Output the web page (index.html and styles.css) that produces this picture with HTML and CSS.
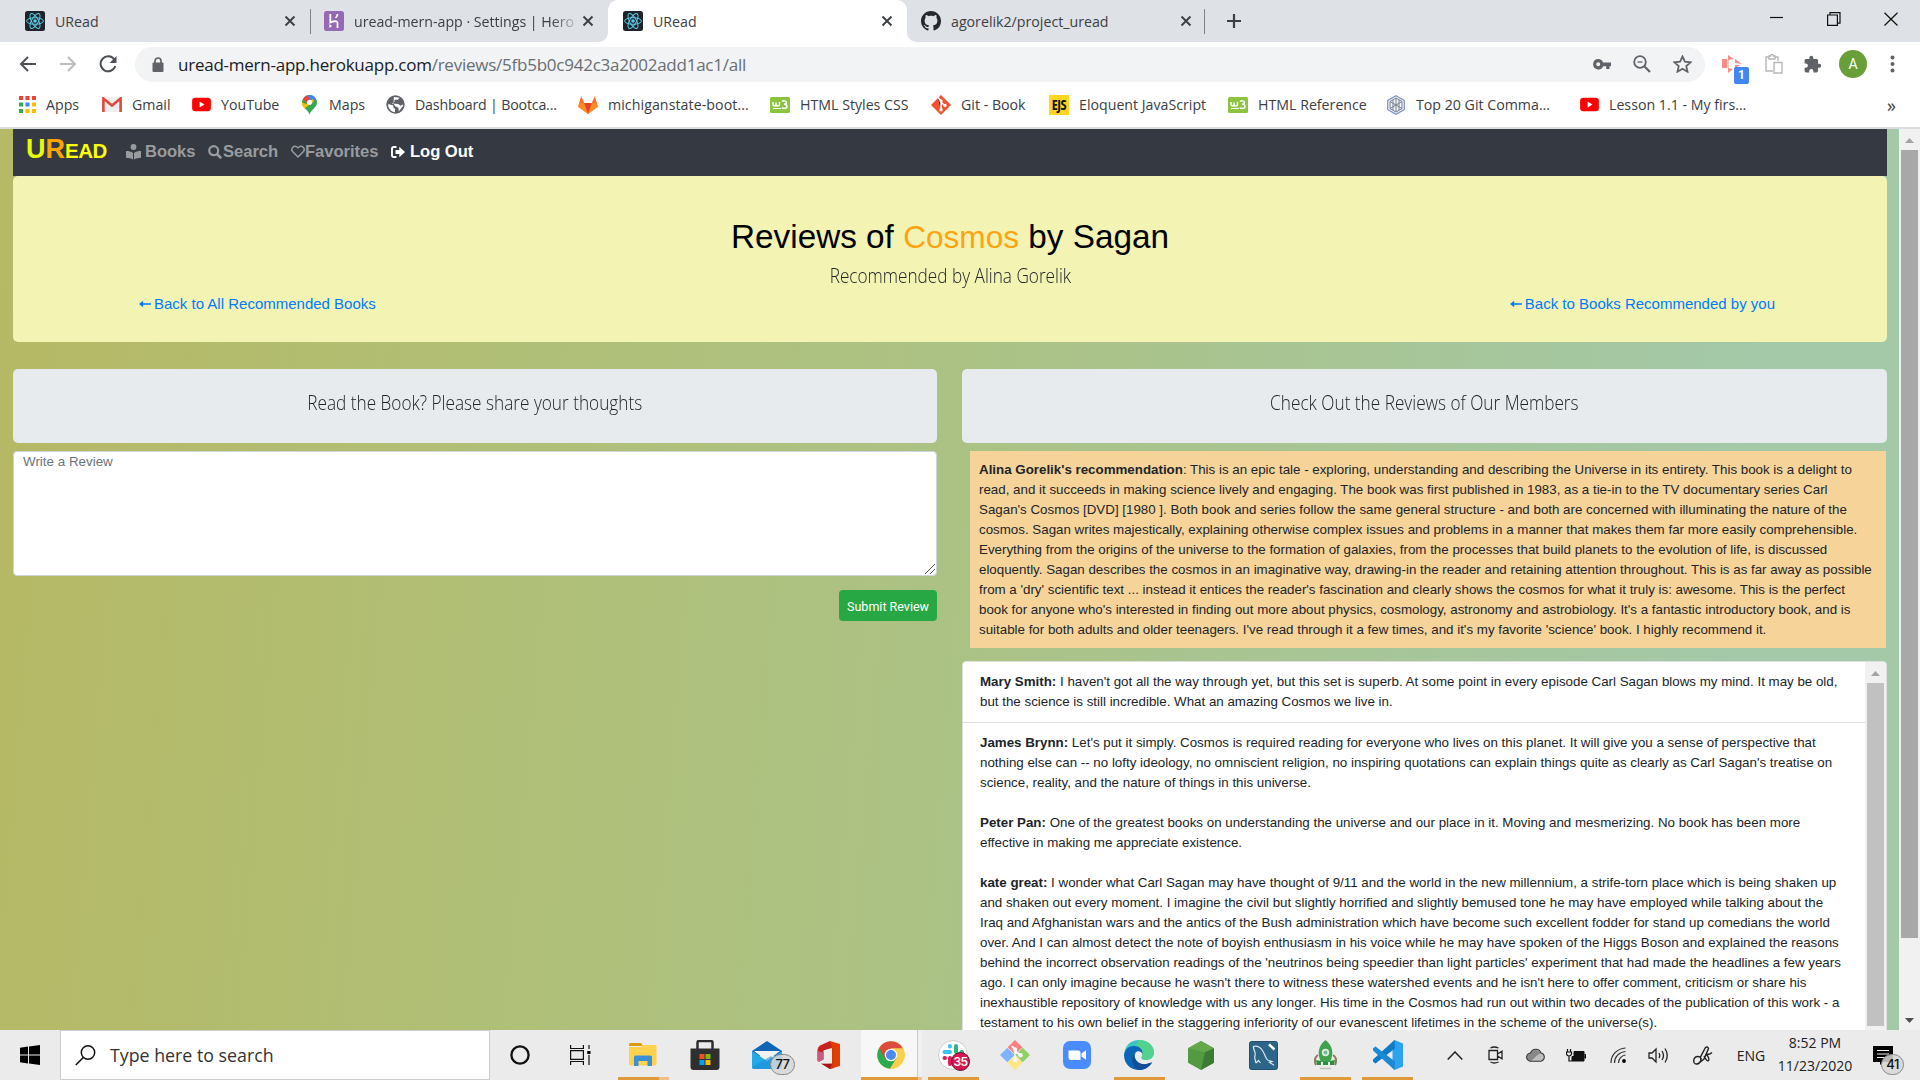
FILE: index.html
```html
<!DOCTYPE html>
<html lang="en">
<head>
<meta charset="utf-8">
<title>URead</title>
<link rel="stylesheet" href="styles.css">
</head>
<body>
<svg class="defs" width="0" height="0">
  <symbol id="react" viewBox="0 0 20 20"><rect width="20" height="20" rx="2.5" fill="#20232a"/><g fill="none" stroke="#5ccbe4" stroke-width="1"><ellipse cx="10" cy="10" rx="8.4" ry="3.3"/><ellipse cx="10" cy="10" rx="8.4" ry="3.3" transform="rotate(60 10 10)"/><ellipse cx="10" cy="10" rx="8.4" ry="3.3" transform="rotate(120 10 10)"/></g><circle cx="10" cy="10" r="1.8" fill="#5ccbe4"/></symbol>
  <symbol id="x" viewBox="0 0 12 12"><path d="M1.5 1.5l9 9M10.500 1.500l-9 9" stroke="#3c4043" stroke-width="1.900" fill="none"/></symbol>
  <symbol id="w3" viewBox="0 0 20 16"><rect width="20" height="16" rx="1.500" fill="#8bc53f"/><path d="M3 5v2.500c0 2 3 2 3 0V5.500v2c0 2 3.500 2 3.500 0V5M12 4.500c1-1 4.500-1 4.500 1 0 1.500-1.500 1.800-2.500 1.800 1.500 0 3 .5 3 2.200 0 2.300-4 2.300-5 1" fill="none" stroke="#fff" stroke-width="1.500"/><path d="M3 11.500h8" stroke="#fff" stroke-width="1"/></symbol>
  <symbol id="yt" viewBox="0 0 20 16"><rect y=".8" width="20" height="14.400" rx="3.500" fill="#f00"/><path d="M8 4.800v6.400l5.200-3.200z" fill="#fff"/></symbol>
</svg>

<header class="tabs">
  <div class="tab tab-1"><svg class="fav"><use href="#react"/></svg><span class="tab-name">URead</span><svg class="close"><use href="#x"/></svg></div>
  <div class="tab tab-2"><svg class="fav" viewBox="0 0 20 20"><rect width="20" height="20" rx="2.500" fill="#9669b5"/><path d="M6.300 3v8.500c2-1 7.200-2.500 7.200.5v5" fill="none" stroke="#fff" stroke-width="1.800"/><path d="M5.400 13l2.600 2-2.600 2zM12.600 3h1.800q0 2.500-1.800 4h-1.800q1.800-2 1.800-4z" fill="#fff"/></svg><span class="tab-name fade">uread-mern-app · Settings | Hero</span><svg class="close"><use href="#x"/></svg></div>
  <div class="tab tab-3"><svg class="fav"><use href="#react"/></svg><span class="tab-name">URead</span><svg class="close"><use href="#x"/></svg></div>
  <div class="tab tab-4"><svg class="fav" viewBox="0 0 16 16"><path fill="#24292e" d="M8 0C3.580 0 0 3.580 0 8c0 3.540 2.290 6.530 5.470 7.590.4.070.550-.170.550-.380 0-.190-.010-.820-.010-1.490-2.010.370-2.530-.490-2.690-.940-.090-.230-.480-.940-.820-1.130-.280-.150-.680-.520-.010-.530.630-.010 1.080.580 1.230.820.720 1.210 1.870.870 2.330.660.070-.520.280-.870.510-1.070-1.780-.200-3.640-.890-3.640-3.950 0-.870.310-1.590.820-2.150-.080-.200-.360-1.020.080-2.120 0 0 .670-.210 2.200.820.640-.180 1.320-.270 2-.270s1.360.090 2 .270c1.530-1.040 2.200-.820 2.200-.820.440 1.100.160 1.920.080 2.120.510.560.820 1.270.820 2.150 0 3.070-1.870 3.750-3.650 3.950.290.250.540.730.540 1.480 0 1.070-.010 1.930-.010 2.200 0 .210.150.460.550.380A8.010 8.010 0 0 0 16 8c0-4.420-3.580-8-8-8z"/></svg><span class="tab-name">agorelik2/project_uread</span><svg class="close"><use href="#x"/></svg></div>
  <svg class="plus" viewBox="0 0 16 16"><path d="M8 1v14M1 8h14" stroke="#3c4043" stroke-width="2.200"/></svg>
  <div class="win">
    <svg width="14" height="14"><path d="M0 5.500h13" stroke="#111" stroke-width="1.200"/></svg>
    <svg width="14" height="14"><path d="M.6 3h9.800v10.400H.6zM3 3V.6h10v10.600h-2.500" fill="none" stroke="#111" stroke-width="1.200"/></svg>
    <svg width="14" height="14"><path d="M.5.8l13 12.700M13.500.8l-13 12.700" stroke="#111" stroke-width="1.200"/></svg>
  </div>
</header>

<div class="toolbar">
  <div class="nav-buttons">
    <svg width="18" height="16" viewBox="0 0 18 16"><path d="M17 8H2M9 1L2 8l7 7" fill="none" stroke="#4d5156" stroke-width="2"/></svg>
    <svg width="18" height="16" viewBox="0 0 18 16"><path d="M1 8h15M9 1l7 7-7 7" fill="none" stroke="#babcbe" stroke-width="2"/></svg>
    <svg width="18" height="18" viewBox="0 0 18 18"><path d="M15.300 4.500A7.500 7.500 0 1 0 16.300 11" fill="none" stroke="#4d5156" stroke-width="2"/><path d="M17.500 1v7h-7z" fill="#4d5156"/></svg>
  </div>
  <div class="omnibox">
    <svg width="12" height="15" viewBox="0 0 12 15"><path d="M3 6V4a3 3 0 0 1 6 0v2" fill="none" stroke="#5f6368" stroke-width="1.700"/><rect x=".5" y="5.500" width="11" height="9.500" rx="1" fill="#5f6368"/></svg>
    <span class="url"><b>uread-mern-app.herokuapp.com</b>/reviews/5fb5b0c942c3a2002add1ac1/all</span>
    <div class="omni-icons">
      <svg width="18" height="11" viewBox="0 0 18 11"><path fill="#5f6368" fill-rule="evenodd" d="M5.200 0a5.200 5.200 0 0 1 4.900 3.500H18v3.800h-1.500V10h-3.300V7.300h-3.100A5.200 5.200 0 1 1 5.200 0zm0 3.300a2 2 0 1 0 0 4 2 2 0 0 0 0-4z"/></svg>
      <svg width="18" height="18" viewBox="0 0 18 18"><circle cx="7" cy="7" r="5.800" fill="none" stroke="#5f6368" stroke-width="1.800"/><path d="M11.300 11.300l5.700 5.700" stroke="#5f6368" stroke-width="2.200"/><path d="M4.500 7h5" stroke="#5f6368" stroke-width="1.300"/></svg>
      <svg width="19" height="18" viewBox="0 0 19 18"><path d="M9.500 1.500l2.400 5.200 5.700.6-4.300 3.800 1.200 5.600-5-2.900-5 2.900 1.200-5.600L1.400 7.300l5.700-.6z" fill="none" stroke="#5f6368" stroke-width="1.800"/></svg>
    </div>
  </div>
  <div class="ext-icons">
    <div class="ext"><svg width="20" height="18" viewBox="0 0 20 18"><path d="M0 4h5v9H0zM6 0l6 4-6 1zM6 13l5 1-5 4zM13 4l7 5-7-1zM13 10l5 0-5 4z" fill="#f98b88"/><path d="M6 5v8" stroke="#f98b88"/></svg><span class="ext-badge">1</span></div>
    <svg width="18" height="20" viewBox="0 0 18 20"><path d="M8 17H1V3h3M10 3h3v4M4 2h1.500a1.500 1.500 0 0 1 3 0H10v3H4zM9 8.500h8V19H9z" fill="none" stroke="#b5b7b9" stroke-width="1.400"/></svg>
    <svg width="19" height="19" viewBox="0 0 24 24"><path fill="#5f6368" d="M20.500 11H19V7c0-1.100-.9-2-2-2h-4V3.500a2.500 2.500 0 0 0-5 0V5H4c-1.100 0-2 .9-2 2v3.800h1.500a2.700 2.700 0 0 1 0 5.400H2V20c0 1.100.9 2 2 2h3.800v-1.500a2.700 2.700 0 0 1 5.400 0V22H17c1.100 0 2-.9 2-2v-4h1.500a2.500 2.500 0 0 0 0-5z"/></svg>
    <span class="avatar">A</span>
    <svg width="5" height="18" viewBox="0 0 5 18"><g fill="#5f6368"><circle cx="2.500" cy="2.500" r="2"/><circle cx="2.500" cy="9" r="2"/><circle cx="2.500" cy="15.500" r="2"/></g></svg>
  </div>
</div>

<nav class="bookmarks">
  <span class="bm bm-apps"><svg width="17" height="17" viewBox="0 0 17 17"><path d="M0 0h4v4H0zM6.500 0h4v4h-4zM13 0h4v4h-4z" fill="#ea4335"/><path d="M0 6.500h4v4H0z" fill="#34a853"/><path d="M6.500 6.500h4v4h-4z" fill="#4285f4"/><path d="M13 6.500h4v4h-4zM6.500 13h4v4h-4zM13 13h4v4h-4z" fill="#fbbc05"/><path d="M0 13h4v4H0z" fill="#34a853"/></svg>Apps</span>
  <span class="bm"><svg width="20" height="15" viewBox="0 0 20 15"><path fill="#eee" d="M1 0h18v15H1z"/><path d="M1.400 15V1.500L10 8.500l8.600-7V15" fill="none" stroke="#dd4b3e" stroke-width="2.600"/></svg>Gmail</span>
  <span class="bm"><svg width="19" height="15"><use href="#yt"/></svg>YouTube</span>
  <span class="bm bm-maps"><svg width="15" height="20" viewBox="0 0 15 20"><path fill="#34a853" d="M7.500 20C7 15 0 13 0 7.500a7.500 7.500 0 0 1 15 0C15 13 8 15 7.500 20z"/><path fill="#4285f4" d="M5 .5a7.500 7.500 0 0 1 9 3.500L8.500 8z"/><path fill="#ea4335" d="M5 .5L8 4 4 8.500 1.200 3.500A7.500 7.500 0 0 1 5 .5z"/><path fill="#fbbc05" d="M4.500 9l6-5 1.500 2.500-9.500 7C0 11 0 9 0 7.500z"/><circle cx="7.500" cy="7.300" r="2.600" fill="#fff"/></svg>Maps</span>
  <span class="bm bm-dash"><svg width="19" height="19" viewBox="0 0 18 18"><circle cx="9" cy="9" r="8.700" fill="#5f6368"/><path d="M2 8.500L7 10v2l1.500 1v3.300A7.300 7.300 0 0 1 2 8.500zM7.500 1.800L13 2.500 11 4.500H8v2L5.500 8l6 .5 2.500 1.800 2-1.300.2 1.500-4.200 5.200c.2-3 0-4-3-4.700l-2-3z" fill="#fff"/></svg>Dashboard | Bootca...</span>
  <span class="bm bm-lab"><svg width="20" height="18" viewBox="0 0 20 18"><path d="M10 18L0 10.700 3.200 0l3 7h7.600l3-7L20 10.700z" fill="#fc6d26"/><path d="M10 18L6.200 7h7.600z" fill="#e24329"/><path d="M0 10.700L1.500 7h4.700L10 18zM20 10.700L18.500 7h-4.700L10 18z" fill="#fca326" opacity=".55"/></svg>michiganstate-boot...</span>
  <span class="bm"><svg width="20" height="16"><use href="#w3"/></svg>HTML Styles CSS</span>
  <span class="bm"><svg width="20" height="20" viewBox="0 0 20 20"><path d="M10 0l10 10-10 10L0 10z" fill="#f4502f"/><path d="M7 2.500L10 6v9M10 7l4 4" stroke="#fff" stroke-width="1.500"/><g fill="#fff"><circle cx="10" cy="6" r="1.700"/><circle cx="10" cy="14.800" r="1.700"/><circle cx="14" cy="10.500" r="1.700"/></g></svg>Git - Book</span>
  <span class="bm"><span class="ejs">EJS</span>Eloquent JavaScript</span>
  <span class="bm"><svg width="20" height="16"><use href="#w3"/></svg>HTML Reference</span>
  <span class="bm"><svg width="20" height="20" viewBox="0 0 20 20"><path d="M10 .8l8.300 4.600v9.200L10 19.200l-8.300-4.600V5.400z" fill="#eef1f8" stroke="#7f93c8" stroke-width="1.200"/><path d="M10 3l6 3.500v7L10 17l-6-3.500v-7zM10 3v14M4 6.500l12 7M16 6.500l-12 7M7 5v10M13 5v10" fill="none" stroke="#7a828c" stroke-width="1"/></svg>Top 20 Git Comma...</span>
  <span class="bm bm-yt"><svg width="19" height="15"><use href="#yt"/></svg>Lesson 1.1 - My firs...</span>
  <span class="more">»</span>
</nav>

<div class="viewport">
  <main class="page">
    <nav class="navbar">
      <span class="brand"><span class="brand-u">U</span><span class="brand-r">R</span><span class="brand-s">EAD</span></span>
      <span class="nav-link nav-books"><svg width="15" height="16" viewBox="0 0 15 16"><circle cx="7.500" cy="3" r="2.900"/><path d="M0 7c3 0 5 .5 7 2v6.500c-2-1.200-4-1.600-7-1.700zM15 7c-3 0-5 .5-7 2v6.500c2-1.200 4-1.600 7-1.700z"/></svg>Books</span>
      <span class="nav-link nav-search"><svg width="14" height="14" viewBox="0 0 14 14"><circle cx="5.700" cy="5.700" r="4.500" fill="none" stroke="#999b9f" stroke-width="2.200"/><path d="M9 9l4.200 4.200" stroke="#999b9f" stroke-width="2.600"/></svg>Search</span>
      <span class="nav-link nav-fav"><svg width="14" height="13" viewBox="0 0 14 13"><path d="M7 12L1.800 6.800C-.8 4 2.800-1 7 2.800 11.200-1 14.800 4 12.200 6.800z" fill="none" stroke="#999b9f" stroke-width="1.500"/></svg>Favorites</span>
      <span class="nav-link nav-out"><svg width="14" height="12" viewBox="0 0 14 12"><path d="M5.500 1H2.800Q1 1 1 2.800v6.400Q1 11 2.800 11h2.700" fill="none" stroke="#fff" stroke-width="1.900"/><path d="M4.500 4h3.800V.8L14 6l-5.700 5.200V8H4.500z"/></svg>Log Out</span>
    </nav>
    <section class="hero">
      <h1>Reviews of <span class="book">Cosmos</span> by Sagan</h1>
      <p class="by"><span class="narrow">Recommended by Alina Gorelik</span></p>
      <div class="links">
        <a><svg width="12" height="8" viewBox="0 0 13 8"><path d="M4.500 .5v2.600H13v1.800H4.500v2.600L0 4z"/></svg>Back to All Recommended Books</a>
        <a><svg width="12" height="8" viewBox="0 0 13 8"><path d="M4.500 .5v2.600H13v1.800H4.500v2.600L0 4z"/></svg>Back to Books Recommended by you</a>
      </div>
    </section>
    <div class="columns">
      <section class="col">
        <h2 class="panel"><span class="narrow">Read the Book? Please share your thoughts</span></h2>
        <div class="textarea">Write a Review<svg width="10" height="10"><path d="M0 10L10 0M5 10l5-5" stroke="#555" stroke-width="1"/></svg></div>
        <span class="submit">Submit Review</span>
      </section>
      <section class="col">
        <h2 class="panel"><span class="narrow">Check Out the Reviews of Our Members</span></h2>
        <p class="rec"><b>Alina Gorelik's recommendation</b>: This is an epic tale - exploring, understanding and describing the Universe in its entirety. This book is a delight to<br>read, and it succeeds in making science lively and engaging. The book was first published in 1983, as a tie-in to the TV documentary series Carl<br>Sagan's Cosmos [DVD] [1980 ]. Both book and series follow the same general structure - and both are concerned with illuminating the nature of the<br>cosmos. Sagan writes majestically, explaining otherwise complex issues and problems in a manner that makes them far more easily comprehensible.<br>Everything from the origins of the universe to the formation of galaxies, from the processes that build planets to the evolution of life, is discussed<br>eloquently. Sagan describes the cosmos in an imaginative way, drawing-in the reader and retaining attention throughout. This is as far away as possible<br>from a 'dry' scientific text ... instead it entices the reader's fascination and clearly shows the cosmos for what it truly is: awesome. This is the perfect<br>book for anyone who's interested in finding out more about physics, cosmology, astronomy and astrobiology. It's a fantastic introductory book, and is<br>suitable for both adults and older teenagers. I've read through it a few times, and it's my favorite 'science' book. I highly recommend it.</p>
        <div class="reviews">
          <div class="review-list">
            <p class="first"><b>Mary Smith:</b> I haven't got all the way through yet, but this set is superb. At some point in every episode Carl Sagan blows my mind. It may be old,<br>but the science is still incredible. What an amazing Cosmos we live in.</p>
            <p><b>James Brynn:</b> Let's put it simply. Cosmos is required reading for everyone who lives on this planet. It will give you a sense of perspective that<br>nothing else can -- no lofty ideology, no omniscient religion, no inspiring quotations can explain things quite as clearly as Carl Sagan's treatise on<br>science, reality, and the nature of things in this universe.</p>
            <p><b>Peter Pan:</b> One of the greatest books on understanding the universe and our place in it. Moving and mesmerizing. No book has been more<br>effective in making me appreciate existence.</p>
            <p><b>kate great:</b> I wonder what Carl Sagan may have thought of 9/11 and the world in the new millennium, a strife-torn place which is being shaken up<br>and shaken out every moment. I imagine the civil but slightly horrified and slightly bemused tone he may have employed while talking about the<br>Iraq and Afghanistan wars and the antics of the Bush administration which have become such excellent fodder for stand up comedians the world<br>over. And I can almost detect the note of boyish enthusiasm in his voice while he may have spoken of the Higgs Boson and explained the reasons<br>behind the incorrect observation readings of the 'neutrinos being speedier than light particles' experiment that had made the headlines a few years<br>ago. I can only imagine because he wasn't there to witness these watershed events and he isn't here to offer comment, criticism or share his<br>inexhaustible repository of knowledge with us any longer. His time in the Cosmos had run out within two decades of the publication of this work - a<br>testament to his own belief in the staggering inferiority of our evanescent lifetimes in the scheme of the universe(s).</p>
          </div>
          <div class="inner-bar"><svg width="9" height="5"><path d="M0 5L4.500 0 9 5z" fill="#a3a3a3"/></svg><i></i></div>
        </div>
      </section>
    </div>
  </main>
  <div class="scrollbar"><svg width="9" height="5"><path d="M0 5L4.500 0 9 5z" fill="#a3a3a3"/></svg><i></i><svg width="9" height="5"><path d="M0 0h9L4.500 5z" fill="#505050"/></svg></div>
</div>

<footer class="taskbar">
  <div class="start"><svg width="20" height="20" viewBox="0 0 20 20"><path d="M0 2.800L8 1.600v7.900H0zM9 1.500L20 0v9.500H9zM0 10.500h8v7.900l-8-1.200zM9 10.500h11V20L9 18.500z"/></svg></div>
  <div class="search"><svg width="21" height="21" viewBox="0 0 21 21"><circle cx="13" cy="7.500" r="6.700" fill="none" stroke="#111" stroke-width="1.500"/><path d="M8.300 12.500L.8 20" stroke="#111" stroke-width="1.600"/></svg>Type here to search</div>
  <div class="slots">
    <div class="slot"><svg width="20" height="20"><circle cx="10" cy="10" r="8.600" fill="none" stroke="#111" stroke-width="2.300"/></svg></div>
    <div class="slot"><svg width="21" height="20" viewBox="0 0 21 20"><path d="M.6 0v3.500h12.800V0M.6 20v-3.500h12.800V20M.6 5.600h12.800v8.800H.6zM19 0v4M19 10v10" fill="none" stroke="#111" stroke-width="1.200"/><path d="M17.300 6h3.200v3h-3.200z"/></svg></div>
    <div class="slot run group"><svg width="28" height="24" viewBox="0 0 28 24"><path d="M0 1.500Q0 0 1.500 0H12l2 3H0z" fill="#df9a07"/><path d="M0 4h12l2-2h12.500q1 0 1 1v18q0 1.500-1.500 1.500H1.500Q0 22.500 0 21z" fill="#ffd24e"/><path d="M5 14q0-1.500 1.500-1.500h15q1.500 0 1.500 1.500v9h-4.500v-5h-9v5H5z" fill="#3d8fd3"/></svg></div>
    <div class="slot"><svg width="30" height="30" viewBox="0 0 30 30"><path d="M7.500 9V2.500Q7.500 1 9 1h12q1.500 0 1.500 1.500V9" fill="none" stroke="#2d2d2d" stroke-width="2.500"/><path d="M.5 8.500h29V27q0 3-3 3h-23q-3 0-3-3z" fill="#2f2f2f"/><path d="M9.500 14h5v5h-5z" fill="#f25022"/><path d="M15.500 14h5v5h-5z" fill="#7fba00"/><path d="M9.500 20h5v5h-5z" fill="#00a4ef"/><path d="M15.500 20h5v5h-5z" fill="#ffb900"/></svg></div>
    <div class="slot"><svg width="30" height="28" viewBox="0 0 30 28"><path d="M0 10L15 0l15 10v5H0z" fill="#1066b5"/><path d="M2 10h26L15 20z" fill="#f2f2f2"/><path d="M0 10l15 10L30 10v16q0 2-2 2H2q-2 0-2-2z" fill="#24a9e6"/><path d="M0 26L19 15l11 11q0 2-2 2H2q-2 0-2-2z" fill="#1a8fdc" opacity=".6"/></svg><span class="badge mail">77</span></div>
    <div class="slot"><svg width="24" height="28" viewBox="0 0 24 28"><path d="M13 0l10 3v22l-10 3z" fill="#e23d06"/><path d="M13 0L3 4.500Q.5 6 .5 9v10q0 2 2 1.500l4-2V9.500L15 7z" fill="#c9211e"/><path d="M.5 10v9q0 2 2 1.500l4-2v-7z" fill="#c65d7e"/><path d="M4 22.500h11V7l2-.5V27l-4 1z" fill="#d83b01"/><path d="M4 22.500h11L13 28z" fill="#a8121d"/><path d="M7 9.500L15 7v15.500H4l3-2z" fill="#ebebeb"/></svg></div>
    <div class="slot run active group"><svg width="28" height="28" viewBox="0 0 28 28"><circle cx="14" cy="14" r="13.700" fill="#fcd04b"/><path d="M14 14L2.100 7.100A13.700 13.700 0 0 0 13 27.700L20 17z" fill="#2da94f"/><path d="M14 14L8 17.500 2.100 7.100A13.700 13.700 0 0 1 26 7.600H14z" fill="#dd4b3e"/><path d="M14 7.600h12A13.700 13.700 0 0 1 13 27.700l6.500-10.500z" fill="#fcd04b"/><circle cx="14" cy="14" r="6.300" fill="#fff"/><circle cx="14" cy="14" r="5" fill="#4a8af4"/></svg></div>
    <div class="slot run"><svg width="30" height="30" viewBox="0 0 30 30"><circle cx="15" cy="15" r="14.500" fill="#fff" stroke="#ccc"/><g stroke-width="4" stroke-linecap="round"><path d="M6.500 12H12M12 6v.5" stroke="#36c5f0"/><path d="M18 6v6M24 12h-.5" stroke="#2eb67d"/><path d="M12 18v6M6.500 18h.5" stroke="#e01e5a"/><path d="M18 18h6" stroke="#ecb22e"/></g></svg><span class="badge slack">35</span></div>
    <div class="slot"><svg width="30" height="30" viewBox="0 0 30 30"><path d="M15 0l7.300 7.300L15 14.600 7.700 7.300z" fill="#fb7f80"/><path d="M7.300 7.700l7.300 7.300-7.300 7.300L0 15z" fill="#80b3ff"/><path d="M22.700 7.700L30 15l-7.300 7.300-7.300-7.300z" fill="#8ed066"/><path d="M15 15.400l7.300 7.300L15 30l-7.300-7.300z" fill="#ffe680"/><path d="M12 6l3 4v10M15 11l5 4" stroke="#f7f7f2" stroke-width="2" fill="none"/><g fill="#f7f7f2"><circle cx="15" cy="9.500" r="2.200"/><circle cx="15" cy="20" r="2.300"/><circle cx="20.500" cy="15.300" r="2.300"/></g></svg></div>
    <div class="slot"><svg width="28" height="28" viewBox="0 0 28 28"><rect width="28" height="28" rx="7" fill="#4a8cff"/><path d="M5.500 9.500H15q2.500 0 2.500 2.500v7H8q-2.500 0-2.500-2.500zM18.500 12.500L23 9.200v9.600l-4.500-3.300z" fill="#fff"/></svg></div>
    <div class="slot run"><svg width="30" height="30" viewBox="0 0 30 30"><path d="M.5 12C2 4 8 0 15 0c9 0 15 6 15 12.500 0 5-4 7.500-8 7.500-3 0-5-1-4.500-2.500 2.500-4-1-8-5.500-8C6 9.500 2 13 .5 17z" fill="#39c5c4"/><path d="M15 0c9 0 15 6 15 12.500 0 5-4 7.500-8 7.500-3 0-5-1-4.500-2.500C20 13 17 8 12 5z" fill="#5bd57e" opacity=".75"/><path d="M0 15C1 8 6 6 10 6c5 0 9 3.500 8.500 8-2-4.500-8.500-3-8 2.500.5 5 6 9 12 7.500 3-.7 5-2 5.500-1.500C25 27.500 20 30 15 30 7 30 0 24 0 15z" fill="#0d65b8"/><path d="M10.500 16c.5 5 6 9.500 12 8 3-.7 5-2 5.500-1.500C25 27.500 20 30 15 30 9 28 5 18 12 12.500q-1.500 1.500-1.500 3.500z" fill="#124f9b"/></svg></div>
    <div class="slot"><svg width="26" height="29" viewBox="0 0 26 29"><path d="M13 0l13 7.200v14.600L13 29 0 21.800V7.200z" fill="#539a43"/><path d="M13 0l13 7.200-9 4L0 7.200z" fill="#64a84b"/><path d="M26 7.200v14.600L13 29l4-17.800z" fill="#3d7a35"/></svg></div>
    <div class="slot"><svg width="29" height="29" viewBox="0 0 29 29"><rect x=".5" y=".5" width="28" height="28" rx="2" fill="#2c6587" stroke="#23506c"/><path d="M7 22l-1-4c-1-3 1-4 0-6.500C5 8 4 6.500 4.500 5.500 8 4.500 11 6 13.500 9.500c2 3 3 7 4.500 9 1 1.300 3.500 1.500 5 2l-2.500.8 4.500 3M7 22l2.500-2.500 2 2.500" fill="none" stroke="#dce8ee" stroke-width="1.200"/><path d="M20 3.500l5.500 5" stroke="#fff" stroke-width="2.400"/></svg></div>
    <div class="slot run"><svg width="23" height="30" viewBox="0 0 23 30"><path d="M4 15Q-1 18 2 25M19 15q5 3 2 10" fill="none" stroke="#8a7c5c" stroke-width="2"/><path d="M11.500 0C19 6 20 14 16 22H7C3 14 4 6 11.500 0z" fill="#3fa34d"/><circle cx="11.500" cy="12.500" r="3.700" fill="#d9efe2"/><circle cx="11.500" cy="12.500" r="2" fill="#78b99a"/><path d="M2 20l5 1v4H3zM21 20l-5 1v4h4zM9 22h5v3H9z" fill="#2f8c44"/><path d="M6 28.500h11" stroke="#bdbdbd" stroke-width="1.500"/></svg></div>
    <div class="slot run"><svg width="31" height="30" viewBox="0 0 31 30"><path d="M22.500 0L31 3.500v23L22.500 30l-2-2V2z" fill="#2ba3ee"/><path d="M22.500 0L1 19.500v2.200L3.500 23.500 23 8.500z" fill="#0d7dc9"/><path d="M22.500 30L1 10.500V8.300L3.500 6.500 23 21.500z" fill="#1a8ad6"/></svg></div>
  </div>
  <div class="tray">
    <svg width="16" height="9"><path d="M.7 8.500L8 1l7.300 7.500" fill="none" stroke="#222" stroke-width="1.500"/></svg>
    <svg width="15" height="18" viewBox="0 0 15 18"><path d="M1 4.500h8.500v9H1zM9.500 8l4.500-2.800v7.600L9.500 10M2.500 2q3.500-2 8 0M2.500 16q3.500 2 8 0" fill="none" stroke="#222" stroke-width="1.300"/></svg>
    <svg width="20" height="14" viewBox="0 0 20 14"><path d="M5 13.200a4 4 0 0 1-.5-8.200C6 .5 13-.5 15 5a4.200 4.200 0 0 1 0 8.200z" fill="#bfbfbf"/><path d="M5 13a4 4 0 0 1-.5-8C7 1 12 1 14.500 5L11 7.500z" fill="#888"/><path d="M5 13.200a4 4 0 0 1-.5-8.200C6 .5 13-.5 15 5a4.200 4.200 0 0 1 0 8.200z" fill="none" stroke="#333" stroke-width="1.100"/></svg>
    <svg width="20" height="13" viewBox="0 0 20 13"><path d="M8 2.500h10v9.500H6V7.500h2z" fill="#111" stroke="#111"/><path d="M18.500 5h1.500v4.500h-1.500z"/><path d="M1.500 0v3M4.500 0v3M.5 3h5v2Q5 7 3 7 1 7 .5 5zM3 7v5h3" fill="none" stroke="#111" stroke-width="1.200"/></svg>
    <svg width="16" height="16" viewBox="0 0 16 16"><g fill="none" stroke="#333" stroke-width="1.200"><path d="M1 16C1 8 7 1.500 15.500 1M4.500 16C4.500 10 9 5 15.500 4.500M8.500 16c0-4 3-7.500 7-8"/></g><circle cx="14" cy="14" r="1.900"/></svg>
    <svg width="21" height="17" viewBox="0 0 21 17"><path d="M1 6h3l4-4v13l-4-4H1zM11 6q1.500 2.500 0 5M14 4q3 4.500 0 9M17 1.500q4.500 7 0 14" fill="none" stroke="#222" stroke-width="1.300"/></svg>
    <svg width="20" height="19" viewBox="0 0 20 19"><path d="M8 15.500L7.500 11 12.500 1.500q2-1.500 3 1L11 13zM7.500 11C2 9 0 13 1 16.500q1.500 2.500 4.500 1T8 12M11 10q3 6 4.500 4.500T13 7.500q3 2 6-1" fill="none" stroke="#222" stroke-width="1.400"/></svg>
    <span>ENG</span>
    <span class="clock">8:52 PM<br>11/23/2020</span>
    <div class="note"><svg width="20" height="19" viewBox="0 0 20 19"><path d="M0 0h20v16H10l-3 3v-3H0z"/><path d="M4 4.500h12M4 8h12M4 11.500h8" stroke="#eee" stroke-width="1.200"/></svg><span class="badge count">41</span></div>
  </div>
</footer>
</body>
</html>
```
FILE: styles.css
```css
* { box-sizing: border-box; }
body { margin: 0; width: 1920px; height: 1080px; overflow: hidden; display: flex; flex-direction: column; font-family: "Open Sans", sans-serif; font-size: 14.200px; color: #3c4043; background: #fff; white-space: nowrap; }
svg { flex: none; display: block; }
.defs { position: absolute; }
h1, h2, p { margin: 0; font-weight: 400; }

/* tab strip */
.tabs { height: 42px; flex: none; display: flex; background: #dee1e6; }
.tab { display: flex; align-items: center; height: 42px; }
.fav { width: 20px; height: 20px; margin-right: 10px; }
.close { width: 12px; height: 12px; margin-left: auto; }
.tab-1 { width: 310px; padding: 0 14px 0 25px; }
.tab-2 { width: 298px; padding: 0 14px; position: relative; }
.tab-2::before, .tab-4::after { content: ""; position: absolute; left: 0; top: 9px; width: 1px; height: 25px; background: #808488; }
.tab-2 .tab-name { letter-spacing: -.02px; }
.fade { mask-image: linear-gradient(to right, #000 90%, transparent 103%); }
.tab-3 { width: 299px; padding: 0 14px 0 15px; background: #fff; border-radius: 10px 10px 0 0; position: relative; }
.tab-3::before, .tab-3::after { content: ""; position: absolute; bottom: 0; width: 9px; height: 9px; }
.tab-3::before { left: -9px; background: radial-gradient(circle at 0 0, transparent 8.500px, #fff 9px); }
.tab-3::after { right: -9px; background: radial-gradient(circle at 100% 0, transparent 8.500px, #fff 9px); }
.tab-4 { width: 298px; padding: 0 13px 0 14px; position: relative; }
.tab-4::after { left: auto; right: 0; }
.plus { width: 16px; height: 16px; margin: 13px 0 0 21px; }
.win { display: flex; gap: 43px; margin: 12px 22px 0 auto; }

/* toolbar */
.toolbar { height: 44px; flex: none; display: flex; align-items: center; }
.nav-buttons { width: 135px; display: flex; gap: 22px; padding-left: 19px; align-items: center; }
.omnibox { width: 1570px; height: 35px; border-radius: 18px; background: #f1f3f4; display: flex; align-items: center; padding: 0 13px 0 17px; }
.url { margin-left: 14px; font-size: 17px; letter-spacing: -.241px; color: #6a6e73; }
.url b { font-weight: 400; color: #202124; }
.omni-icons { margin-left: auto; display: flex; gap: 22px; align-items: center; }
.ext-icons { flex: 1; display: grid; grid-template-columns: 54px 30px 47px 34px 44px; align-items: center; justify-items: center; }
.ext { position: relative; }
.ext-badge { position: absolute; left: 12px; top: 12px; width: 15px; height: 17px; border-radius: 2px; background: #4285f4; color: #fff; font: 700 12px/17px Roboto, sans-serif; text-align: center; }
.avatar { width: 28px; height: 28px; border-radius: 50%; background: #689f38; color: #fff; font: 14px/28px Roboto, sans-serif; text-align: center; }

/* bookmarks */
.bookmarks { height: 43px; flex: none; border-bottom: 2px solid #dadce0; padding: 0 24px 4px 19px; display: grid; grid-template-columns: 83px 90px 108px 86px 192px 192px 161px 118px 179px 158px 194px 1fr auto; align-items: center; }
.bm { display: flex; align-items: center; gap: 10px; }
.bm-maps { gap: 12px; padding-left: 2px; }
.bm-dash { letter-spacing: -.18px; }
.bm-lab { letter-spacing: .07px; }
.ejs { width: 20px; height: 20px; background: #ffd51e; color: #111; font: 700 14px/20px "Open Sans", sans-serif; font-stretch: 75%; letter-spacing: -.5px; text-align: center; }
.more { font-size: 18px; line-height: 20px; }

/* page viewport */
.viewport { height: 901px; flex: none; display: flex; overflow: hidden; }
.page { width: 1899px; padding: 0 12px 0 13px; background: linear-gradient(95deg, #b6b965 0%, #b0bf76 27%, #abc286 52%, #a3c9a9 91%); font-family: "Liberation Sans", sans-serif; color: #212529; overflow: hidden; }
.navbar { height: 47px; background: #353a42; display: flex; align-items: center; font-weight: 700; font-size: 16.600px; color: #999b9f; fill: #999b9f; padding: 0 0 2px 13px; }
.brand { width: 100px; line-height: 30px; padding-bottom: 1px; color: #ff0; }
.brand-u, .brand-r { font-size: 27px; }
.brand-u { color: #e6fa0c; }
.brand-r { color: #ffa500; }
.brand-s { font-size: 20.500px; letter-spacing: -.5px; }
.nav-link { display: flex; align-items: center; letter-spacing: -.05px; }
.nav-books { width: 82px; gap: 4px; }
.nav-search { width: 83px; gap: 1px; }
.nav-fav { width: 100px; }
.nav-out { gap: 5px; color: #fff; fill: #fff; }

.hero { height: 166px; background: #f3f3b4; border-radius: 5px; text-align: center; padding-top: 41px; }
.hero h1 { font-size: 33.300px; line-height: 40px; color: #000; }
.book { color: #ffa410; font-size: 31.600px; }
.by { font: 300 20px/32px "Open Sans", sans-serif; margin-top: 3px; }
.narrow { display: inline-block; transform: scaleX(.86); }
.links { display: flex; justify-content: space-between; padding: 0 112px 0 126px; margin-top: 2px; font-size: 15px; line-height: 20px; color: #007bff; fill: #007bff; }
.links a { display: flex; align-items: center; gap: 3px; }

.columns { display: grid; grid-template-columns: 924px 925px; gap: 25px; margin-top: 27px; }
.col { display: flex; flex-direction: column; }
.panel { height: 74px; margin-bottom: 8px; border-radius: 5px; background: #e7ebee; text-align: center; font: 300 20px/67px "Open Sans", sans-serif; }
.textarea { height: 125px; position: relative; border: 1px solid #ced4da; border-radius: 4px; background: #fff; padding: 0 9px; font-size: 13.400px; line-height: 19px; color: #6c757d; }
.textarea svg { position: absolute; right: 1px; bottom: 1px; }
.submit { align-self: flex-end; width: 98px; height: 31px; margin-top: 14px; border-radius: 4px; background: #28a745; color: #fff; text-align: center; font: 400 12.500px/33px Roboto, sans-serif; }
.rec { height: 197px; margin: 0 1px 13px 8px; padding: 9px 0 0 9px; background: #f6d499; font-size: 13.340px; line-height: 20px; }
.reviews { height: 400px; display: flex; background: #fff; border: 1px solid #dfdfdf; border-radius: 4px; overflow: hidden; }
.review-list { width: 902px; font-size: 13.340px; line-height: 20px; }
.review-list p { padding: 0 0 20px 17px; }
.review-list .first { height: 61px; padding-top: 10px; margin-bottom: 10px; border-bottom: 1px solid #dfdfdf; }
.inner-bar { width: 21px; background: #f1f1f1; display: flex; flex-direction: column; align-items: center; padding-top: 9px; }
.inner-bar i { width: 17px; height: 343px; margin-top: 7px; background: #c1c1c1; }
.scrollbar { width: 21px; background: #f1f1f1; display: flex; flex-direction: column; align-items: center; padding: 9px 0 7px; }
.scrollbar i { width: 17px; height: 788px; margin: 7px 0 auto; background: #a8a8a8; }

/* taskbar */
.taskbar { height: 50px; flex: none; display: flex; background: #ebebeb; color: #222; }
.start { width: 60px; display: grid; place-items: center; }
.search { width: 430px; background: #fff; border: 1px solid #ccc; display: flex; align-items: center; gap: 14px; padding-left: 14px; font-size: 17.800px; color: #333; }
.slots { display: flex; width: 930px; }
.slot { width: 62px; height: 50px; flex: none; display: grid; place-items: center; position: relative; }
.slot:first-child { width: 60px; }
.slot:nth-child(2) { width: 61px; }
.slot:nth-child(3) { margin-left: 1px; }
.run::after { content: ""; position: absolute; left: 6px; bottom: 0; width: 51px; height: 3px; background: #e09a3a; }
.group::after { width: 51px; background: linear-gradient(to right, #e09a3a 41px, #edc08a 41px); }
.active { background: linear-gradient(to right, transparent 1px, #f7f7f7 1px 57px, #ccc 57px 58px, #f0f0f0 58px); }
.active::after { left: 1px; width: 61px; background: linear-gradient(to right, #e09a3a 57px, #edc08a 57px); }
.badge { position: absolute; border-radius: 11px; border: 1px solid #888; background: rgba(215, 215, 215, .85); color: #111; font: 500 13px/19px Inter, sans-serif; text-align: center; letter-spacing: -.5px; }
.mail { width: 25px; height: 21px; left: 34px; top: 24px; }
.slack { width: 19px; height: 19px; left: 29px; top: 22px; background: #d8174f; border-color: #5b1030; color: #fff; font-weight: 600; line-height: 17px; font-size: 12px; }
.tray { width: 500px; display: grid; grid-template-columns: 35px 47px 33px 48px 36px 44px 46px 50px 78px 58px; padding-left: 17px; align-items: center; justify-items: center; font-size: 14px; }
.clock { text-align: center; line-height: 23px; padding-bottom: 2px; }
.note { position: relative; }
.count { width: 23px; height: 21px; left: 8px; top: 8px; }
```
